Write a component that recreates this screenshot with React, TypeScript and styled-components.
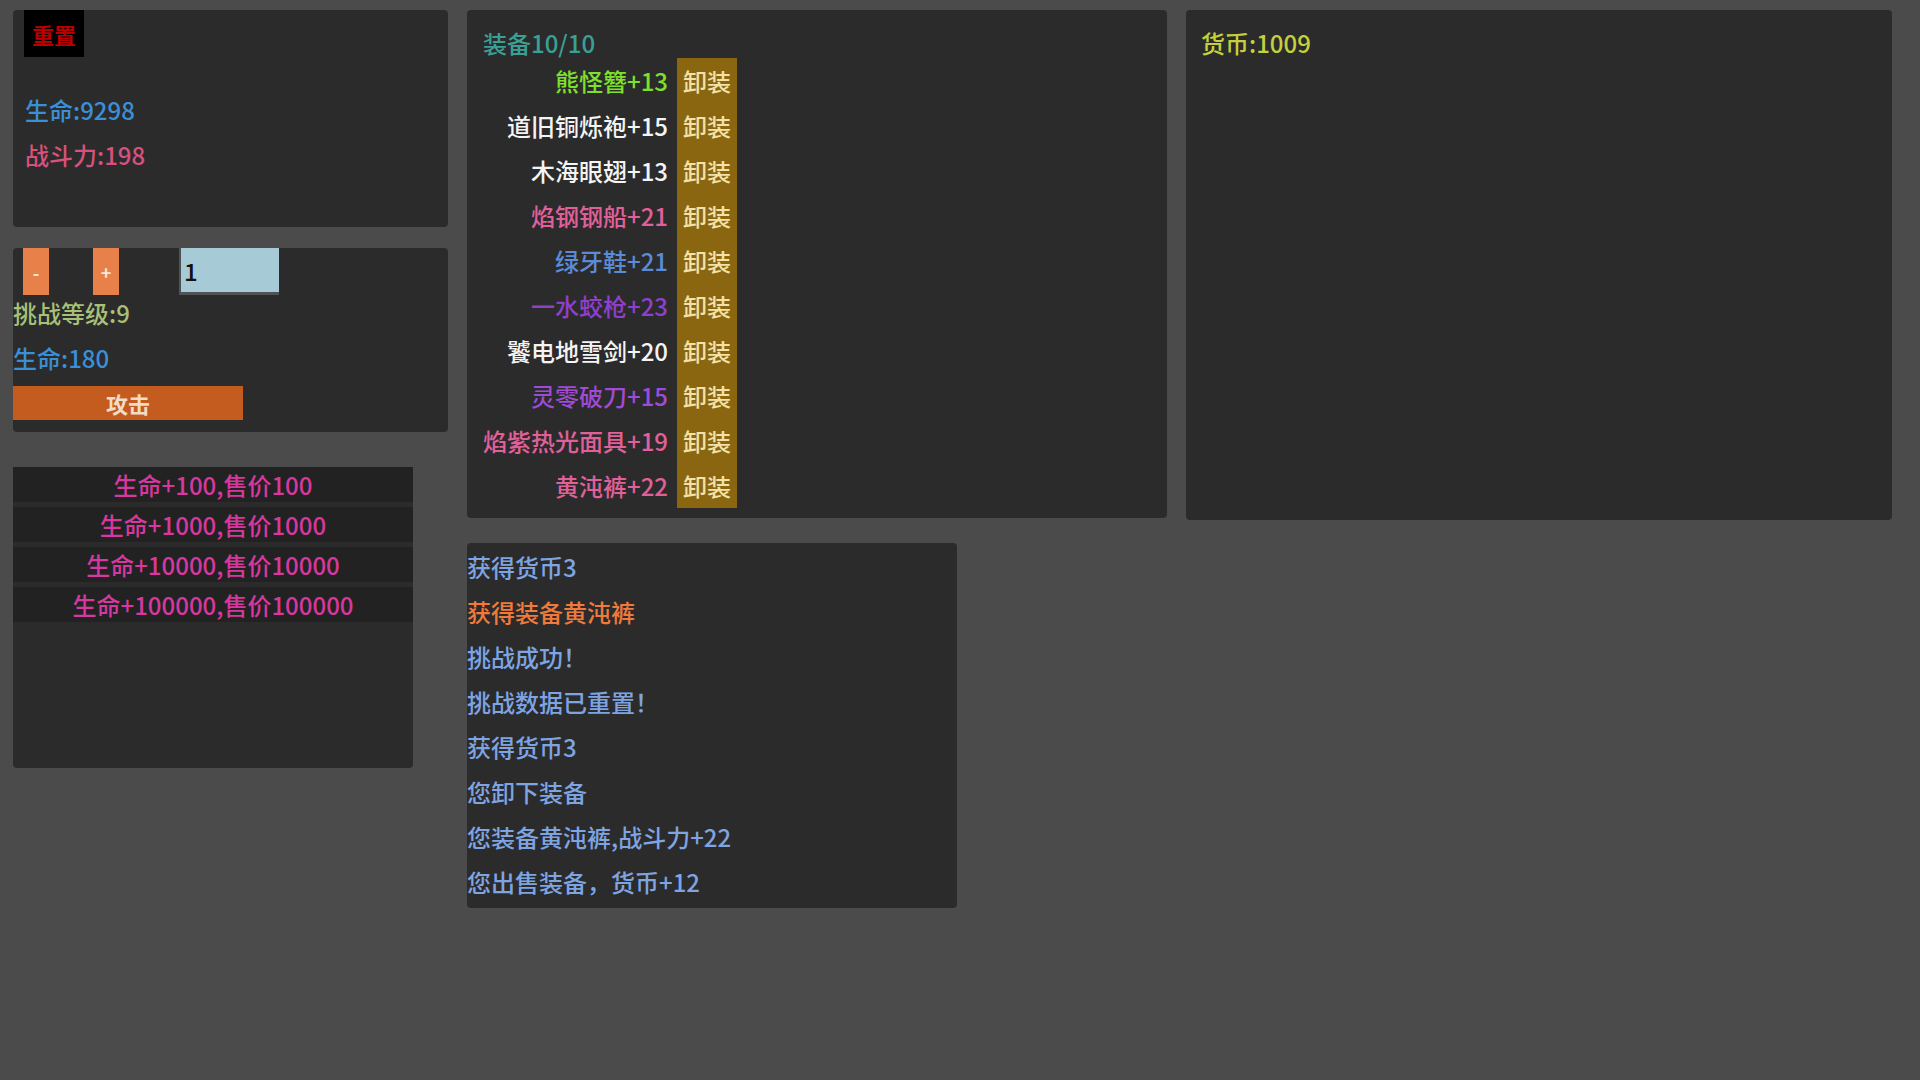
import { FunctionComponent, JSX } from 'react';
import styled, { createGlobalStyle } from 'styled-components';

const GlobalStyle = createGlobalStyle`
  html, body {
    margin: 0;
    padding: 0;
    background-color: #4b4b4b;
  }
  body {
    font-family: 'Noto Sans CJK SC', 'Noto Sans', sans-serif;
    font-size: 24px;
    font-weight: 500;
  }
  * {
    box-sizing: border-box;
  }
`;

const Page = styled.div`
  display: flex;
  align-items: flex-start;
  gap: 19px;
  padding: 10px 13px;
  min-height: 1080px;
`;

const Column = styled.div<{ $width: number }>`
  display: flex;
  flex-direction: column;
  width: ${({ $width }) => $width}px;
`;

const Panel = styled.div<{ $height: number; $top?: number }>`
  background-color: #2b2b2b;
  border-radius: 4px;
  height: ${({ $height }) => $height}px;
  margin-top: ${({ $top }) => $top || 0}px;
`;

const StatsPanel = styled(Panel)`
  padding: 0 12px 0 11px;
`;

const ResetButton = styled.button`
  width: 60px;
  height: 47px;
  border: none;
  background-color: #000;
  color: #b80000;
  font-family: inherit;
  font-size: 22px;
  font-weight: bold;
  padding: 0;
  cursor: pointer;
`;

const Stats = styled.div`
  margin: 30px 0 0 1px;
`;

const Line = styled.div<{ $color: string; $lh?: number; $top?: number }>`
  color: ${({ $color }) => $color};
  line-height: ${({ $lh }) => $lh || 45}px;
  margin-top: ${({ $top }) => $top || 0}px;
  white-space: nowrap;
`;

const ChallengePanel = styled(Panel)`
  padding: 0 0 12px 0;
`;

const ControlRow = styled.div`
  display: flex;
  height: 47px;
`;

const StepButton = styled.button<{ $left: number }>`
  width: 26px;
  height: 47px;
  margin-left: ${({ $left }) => $left}px;
  padding: 0;
  border: none;
  background-color: #e8804a;
  color: #f6e6da;
  font-family: inherit;
  font-size: 18px;
  font-weight: bold;
  cursor: pointer;
`;

const LevelInput = styled.input`
  width: 100px;
  height: 47px;
  margin-left: 60px;
  padding: 0 0 0 3px;
  border: none;
  border-left: 2px solid #4e5456;
  border-bottom: 3px solid #4e5456;
  background-color: #a6cad6;
  color: #111;
  font-family: inherit;
  font-size: 24px;
  font-weight: 500;
  outline: none;
`;

const AttackButton = styled.button`
  display: block;
  width: 230px;
  height: 34px;
  margin-top: 10px;
  padding: 0;
  border: none;
  background-color: #c45c20;
  color: #f2dcc6;
  font-family: inherit;
  font-size: 22px;
  font-weight: bold;
  cursor: pointer;
`;

const ShopPanel = styled(Panel)`
  display: flex;
  flex-direction: column;
  gap: 5px;
`;

const ShopRow = styled.div`
  height: 35px;
  line-height: 35px;
  background-color: #222;
  color: #d6389f;
  text-align: center;
  cursor: pointer;
`;

const EquipPanel = styled(Panel)`
  padding: 18px 16px 10px 16px;
`;

const EquipTitle = styled.div`
  color: #3aa095;
  line-height: 30px;
`;

const EquipTable = styled.div`
  display: grid;
  grid-template-columns: auto 60px;
  column-gap: 9px;
  justify-content: start;
`;

const ItemName = styled.div<{ $color: string }>`
  color: ${({ $color }) => $color};
  text-align: right;
  line-height: 45px;
  white-space: nowrap;
`;

const UnequipButton = styled.div`
  height: 45px;
  line-height: 45px;
  background-color: #8b6610;
  color: #f3e2a8;
  text-align: center;
  cursor: pointer;
`;

const LogPanel = styled(Panel)`
  padding: 1px 0 4px 0;
`;

const CurrencyPanel = styled(Panel)`
  padding: 18px 15px;
`;

const BLUE = '#3a8fd8';
const LOG_BLUE = '#7ea4e2';

const equipment = [
  { name: '熊怪簪+13', color: '#7fe02b' },
  { name: '道旧铜烁袍+15', color: '#f4f4f4' },
  { name: '木海眼翅+13', color: '#f4f4f4' },
  { name: '焰钢钢船+21', color: '#e0609a' },
  { name: '绿牙鞋+21', color: '#5b8bd6' },
  { name: '一水蛟枪+23', color: '#8f3fcb' },
  { name: '饕电地雪剑+20', color: '#f4f4f4' },
  { name: '灵零破刀+15', color: '#a04ad8' },
  { name: '焰紫热光面具+19', color: '#e0609a' },
  { name: '黄沌裤+22', color: '#e0609a' },
];

const shopItems = [
  '生命+100,售价100',
  '生命+1000,售价1000',
  '生命+10000,售价10000',
  '生命+100000,售价100000',
];

const logs = [
  { text: '获得货币3', color: LOG_BLUE },
  { text: '获得装备黄沌裤', color: '#f07a3c' },
  { text: '挑战成功！', color: LOG_BLUE },
  { text: '挑战数据已重置！', color: LOG_BLUE },
  { text: '获得货币3', color: LOG_BLUE },
  { text: '您卸下装备', color: LOG_BLUE },
  { text: '您装备黄沌裤,战斗力+22', color: LOG_BLUE },
  { text: '您出售装备，货币+12', color: LOG_BLUE },
];

const App: FunctionComponent = (): JSX.Element => {
  return (
    <>
      <GlobalStyle />
      <Page>
        <Column $width={435}>
          <StatsPanel $height={217}>
            <ResetButton>重置</ResetButton>
            <Stats>
              <Line $color={BLUE}>生命:9298</Line>
              <Line $color="#d9507c">战斗力:198</Line>
            </Stats>
          </StatsPanel>
          <ChallengePanel $height={184} $top={21}>
            <ControlRow>
              <StepButton $left={10}>-</StepButton>
              <StepButton $left={44}>+</StepButton>
              <LevelInput defaultValue="1" />
            </ControlRow>
            <Line $color="#a8bf78" $lh={36}>挑战等级:9</Line>
            <Line $color={BLUE} $lh={36} $top={9}>生命:180</Line>
            <AttackButton>攻击</AttackButton>
          </ChallengePanel>
          <ShopPanel $height={301} $top={35} style={{ width: 400 }}>
            {shopItems.map((item) => (
              <ShopRow key={item}>{item}</ShopRow>
            ))}
          </ShopPanel>
        </Column>
        <Column $width={700}>
          <EquipPanel $height={508}>
            <EquipTitle>装备10/10</EquipTitle>
            <EquipTable>
              {equipment.map((item) => [
                <ItemName key={item.name} $color={item.color}>{item.name}</ItemName>,
                <UnequipButton key={item.name + '-btn'}>卸装</UnequipButton>,
              ])}
            </EquipTable>
          </EquipPanel>
          <LogPanel $height={365} $top={25} style={{ width: 490 }}>
            {logs.map((log, i) => (
              <Line key={i} $color={log.color}>{log.text}</Line>
            ))}
          </LogPanel>
        </Column>
        <Column $width={706}>
          <CurrencyPanel $height={510}>
            <Line $color="#c4d03c" $lh={30}>货币:1009</Line>
          </CurrencyPanel>
        </Column>
      </Page>
    </>
  );
};

export default App;
